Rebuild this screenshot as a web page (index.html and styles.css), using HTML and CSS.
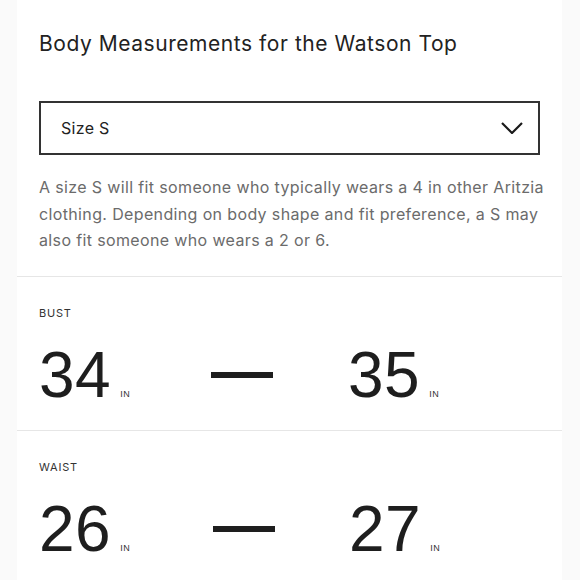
FILE: index.html
```html
<!DOCTYPE html>
<html lang="en">
<head>
<meta charset="utf-8">
<title>Body Measurements</title>
<link rel="stylesheet" href="styles.css">
</head>
<body>
<div class="panel">
  <div class="intro">
    <h1 class="title">Body Measurements for the Watson Top</h1>
    <div class="select">
      <span class="select-label">Size S</span>
      <svg class="chevron" width="22" height="12" viewBox="0 0 22 12" aria-hidden="true">
        <path d="M1 1 L11 11 L21 1" fill="none" stroke="#1a1a1a" stroke-width="2.2"/>
      </svg>
    </div>
    <p class="desc"><span class="line">A size S will fit someone who typically wears a 4 in other Aritzia</span> <span class="line">clothing. Depending on body shape and fit preference, a S may</span> <span class="line">also fit someone who wears a 2 or 6.</span></p>
  </div>
  <div class="measure">
    <div class="label">BUST</div>
    <div class="range">
      <div class="value"><span class="num">34</span><span class="unit">IN</span></div>
      <div class="dash"></div>
      <div class="value"><span class="num">35</span><span class="unit">IN</span></div>
    </div>
  </div>
  <div class="measure">
    <div class="label">WAIST</div>
    <div class="range range-shift">
      <div class="value"><span class="num">26</span><span class="unit">IN</span></div>
      <div class="dash"></div>
      <div class="value"><span class="num">27</span><span class="unit">IN</span></div>
    </div>
  </div>
</div>
</body>
</html>
```
FILE: styles.css
```css
html, body {
  margin: 0;
  padding: 0;
  background: #fafafa;
}
body {
  font-family: Inter, "Noto Sans", sans-serif;
  color: #222;
}
.panel {
  margin: 0 18px 0 17px;
  background: #fff;
  min-height: 580px;
}
.intro {
  padding: 30px 22px 22px 22px;
  border-bottom: 1.5px solid #e6e6e6;
}
.title {
  margin: 0;
  font-size: 21px;
  line-height: 28px;
  font-weight: 400;
  letter-spacing: 0.55px;
  color: #222;
}
.select {
  margin-top: 43px;
  height: 50px;
  border: 2px solid #333;
  display: flex;
  align-items: center;
  justify-content: space-between;
  padding: 0 15px 0 20px;
}
.select-label {
  font-size: 16px;
  letter-spacing: 0.3px;
  color: #222;
}
.chevron {
  display: block;
}
.desc {
  margin: 19px 0 0;
  font-size: 16px;
  line-height: 26.5px;
  letter-spacing: 0.36px;
  color: #6b6b6b;
}
.line {
  display: block;
  white-space: nowrap;
}
.measure {
  padding: 30px 22px 21px;
  border-bottom: 1.5px solid #e6e6e6;
}
.label {
  font-size: 11px;
  line-height: 13px;
  letter-spacing: 0.8px;
  color: #333;
}
.range {
  margin-top: 21px;
  display: grid;
  grid-template-columns: 172px 137px 1fr;
  align-items: baseline;
}
.range-shift {
  grid-template-columns: 174px 136px 1fr;
}
.value {
  display: flex;
  align-items: baseline;
}
.num {
  font-family: "Liberation Sans", Arial, sans-serif;
  font-size: 64px;
  line-height: 68px;
  letter-spacing: 0.5px;
  color: #1e1e1e;
}
.unit {
  font-family: "Liberation Sans", Arial, sans-serif;
  font-size: 9px;
  letter-spacing: 0.5px;
  margin-left: 9px;
  color: #333;
}
.dash {
  align-self: center;
  width: 62px;
  height: 6px;
  background: #1e1e1e;
}
```
